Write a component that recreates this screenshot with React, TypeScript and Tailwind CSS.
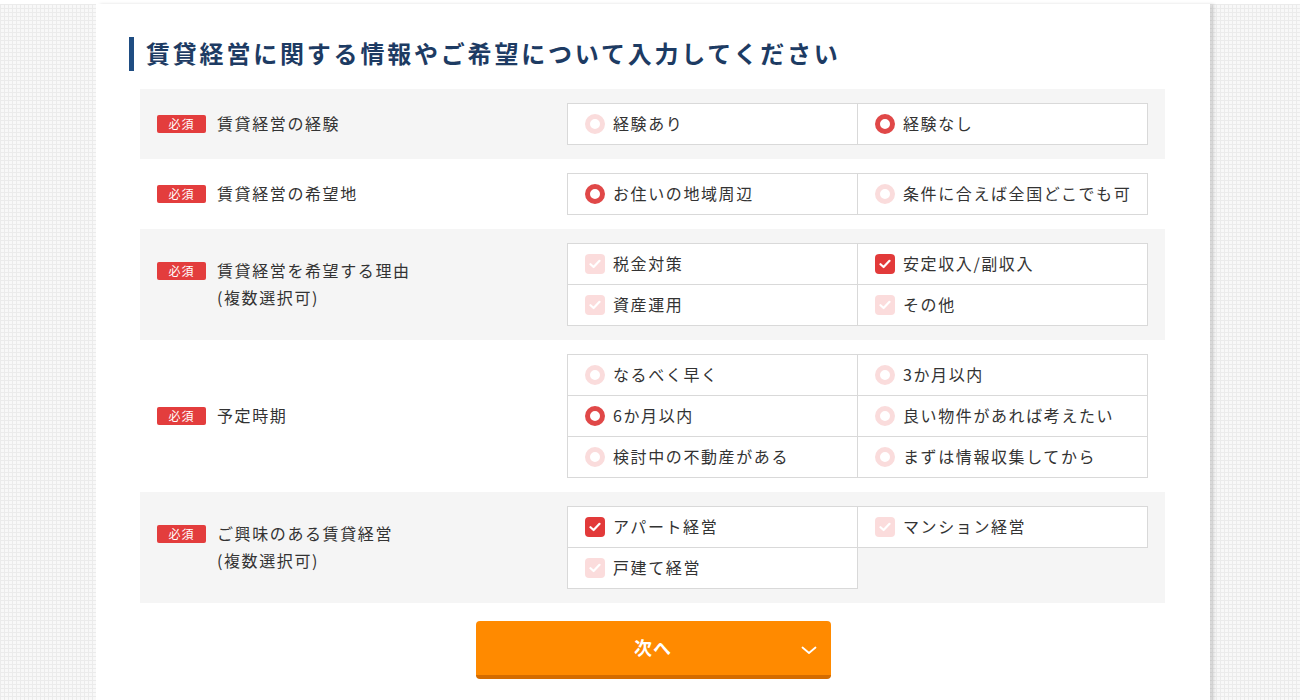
import React from "react";

type Opt = { label: string; checked?: boolean };
type Row = {
  label: string;
  sub?: string;
  kind: "radio" | "check";
  options: Opt[];
  gray: boolean;
};

const rows: Row[] = [
  {
    label: "賃貸経営の経験",
    kind: "radio",
    gray: true,
    options: [{ label: "経験あり" }, { label: "経験なし", checked: true }],
  },
  {
    label: "賃貸経営の希望地",
    kind: "radio",
    gray: false,
    options: [{ label: "お住いの地域周辺", checked: true }, { label: "条件に合えば全国どこでも可" }],
  },
  {
    label: "賃貸経営を希望する理由",
    sub: "(複数選択可)",
    kind: "check",
    gray: true,
    options: [
      { label: "税金対策" },
      { label: "安定収入/副収入", checked: true },
      { label: "資産運用" },
      { label: "その他" },
    ],
  },
  {
    label: "予定時期",
    kind: "radio",
    gray: false,
    options: [
      { label: "なるべく早く" },
      { label: "3か月以内" },
      { label: "6か月以内", checked: true },
      { label: "良い物件があれば考えたい" },
      { label: "検討中の不動産がある" },
      { label: "まずは情報収集してから" },
    ],
  },
  {
    label: "ご興味のある賃貸経営",
    sub: "(複数選択可)",
    kind: "check",
    gray: true,
    options: [
      { label: "アパート経営", checked: true },
      { label: "マンション経営" },
      { label: "戸建て経営" },
    ],
  },
];

const font = "font-['Noto_Sans_CJK_JP','Noto_Sans',sans-serif]";

function Radio({ checked }: { checked?: boolean }) {
  return (
    <span
      className={
        checked
          ? "h-5 w-5 shrink-0 rounded-full border-[5px] border-[#e04848] bg-white"
          : "h-5 w-5 shrink-0 rounded-full border-[5px] border-[#fadcdc] bg-white"
      }
    />
  );
}

function Check({ checked }: { checked?: boolean }) {
  return (
    <span
      className={
        checked
          ? "flex h-5 w-5 shrink-0 items-center justify-center rounded-[4px] bg-[#e23a3a]"
          : "flex h-5 w-5 shrink-0 items-center justify-center rounded-[4px] bg-[#fbdcdc]"
      }
    >
      <svg width="12" height="10" viewBox="0 0 12 10" fill="none">
        <path d="M1.5 5.2 L4.6 8 L10.5 1.8" stroke="#fff" strokeWidth="2.2" strokeLinecap="round" strokeLinejoin="round" />
      </svg>
    </span>
  );
}

export default function App() {
  return (
    <div
      className={`${font} min-h-screen bg-[#f8f8f8] bg-[linear-gradient(to_right,#ebebeb_1px,transparent_1px),linear-gradient(to_bottom,#ebebeb_1px,transparent_1px)] bg-[size:4px_4px] pl-[96px]`}
    >
      <div className="mt-1 w-[1114px] bg-white px-[44px] pb-10 pt-[33px] shadow-[4px_0_3px_rgba(0,0,0,0.13)]">
        <h1 className="-ml-[11px] flex items-center gap-[12px] text-[24px] font-bold leading-[34px] tracking-[2.8px] text-[#1d3b63]">
          <span className="h-[34px] w-[5px] shrink-0 bg-[#1f4d82]" />
          <span className="-mt-[3px]">賃貸経営に関する情報やご希望について入力してください</span>
        </h1>

        <div className="mt-[18px] w-[1025px]">
          {rows.map((r) => (
            <div
              key={r.label}
              className={`flex items-center py-[14px] ${r.gray ? "bg-[#f5f5f5]" : "bg-white"}`}
            >
              <div className="flex w-[427px] items-start gap-[11px] pl-[17px]">
                <span className="mt-[3px] flex h-[18px] w-[49px] shrink-0 items-center justify-center rounded-[2px] bg-[#e33d3d] text-[12px] leading-none tracking-[0.08em] text-white">
                  必須
                </span>
                <div className="-mt-[2px] text-[16px] leading-[27px] tracking-[0.1em] text-[#333]">
                  <div>{r.label}</div>
                  {r.sub && <div>{r.sub}</div>}
                </div>
              </div>
              <div className="grid w-[581px] grid-cols-2 border-l border-t border-[#d9d9d9]">
                {r.options.map((o) => (
                  <div
                    key={o.label}
                    className="flex h-[41px] items-center gap-[8px] border-b border-r border-[#d9d9d9] bg-white pl-[17px] text-[16px] tracking-[0.1em] text-[#333]"
                  >
                    {r.kind === "radio" ? <Radio checked={o.checked} /> : <Check checked={o.checked} />}
                    <span className="-mt-[2px]">{o.label}</span>
                  </div>
                ))}
              </div>
            </div>
          ))}
        </div>

        <div className="mt-[18px] flex justify-center">
          <button className="relative flex h-[58px] w-[355px] items-center justify-center rounded-[4px] border-b-[4px] border-[#d46c00] bg-[#ff8a00] text-[18px] font-bold tracking-[0.05em] text-white">
            <span className="-mt-[2px]">次へ</span>
            <svg
              className="absolute right-[14px] top-[25px]"
              width="16"
              height="9"
              viewBox="0 0 16 9"
              fill="none"
            >
              <path d="M1.5 1.5 L8 7 L14.5 1.5" stroke="#fff" strokeWidth="1.8" strokeLinecap="round" strokeLinejoin="round" />
            </svg>
          </button>
        </div>
      </div>
    </div>
  );
}
